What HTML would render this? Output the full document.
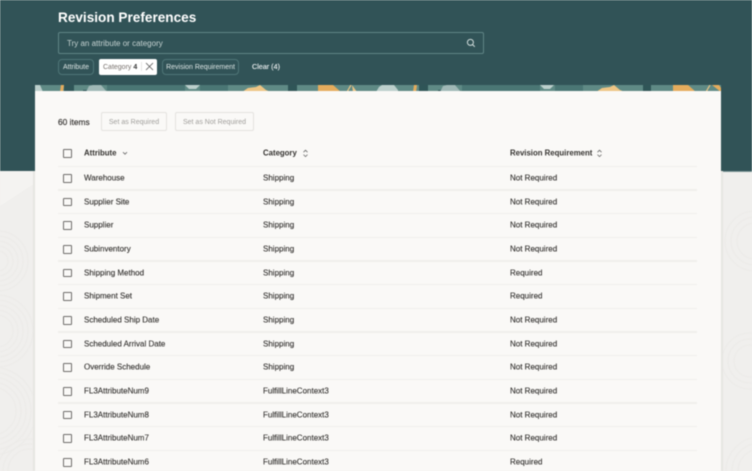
<!DOCTYPE html>
<html><head><meta charset="utf-8"><style>
html,body{margin:0;padding:0;width:752px;height:471px;overflow:hidden;background:#f0efed}
body{font-family:"Liberation Sans",sans-serif;position:relative}
#w{position:absolute;left:0;top:0;width:752px;height:471px;overflow:hidden;filter:blur(.4px)}
.a{position:absolute;white-space:nowrap}
.chip{position:absolute;top:58.5px;height:16px;box-sizing:border-box;border:1px solid #4f7677;border-radius:4px;color:#dde6e5;font-size:7px;line-height:16px;text-align:center}
.btn{position:absolute;top:112px;height:19px;box-sizing:border-box;border:1px solid #e4e2df;border-radius:2px;color:#a09e9b;font-size:7px;line-height:19px;text-align:center}
.cb{position:absolute;left:63px;width:9px;height:8.5px;box-sizing:border-box;border:1.1px solid #6f6d6b;border-radius:1px}
.t{position:absolute;font-size:8px;line-height:10px;color:#2e2c2a;white-space:nowrap;transform:translateY(.7px);-webkit-text-stroke:.1px #2e2c2a}
.h{font-weight:bold;font-size:7.8px;color:#34322f;-webkit-text-stroke:0}
.l{position:absolute;left:58px;width:639px;height:1.3px;background:#f0efec}
</style></head><body><div id="w">
<div class="a" style="left:0;top:0;width:752px;height:171px;background:#315357"></div>
<div class="a" style="left:0;top:170.5px;width:752px;height:1px;background:#7b9596"></div>
<svg class="a" style="left:0;top:171px" width="752" height="300" fill="none" stroke="#e9e8e5" stroke-width=".6">
<path d="M0 35L35 12V0H0Z" fill="#f4f3f1" stroke="none"/>
<circle cx="-2" cy="90" r="30"/><circle cx="-2" cy="90" r="25"/><circle cx="-2" cy="90" r="20"/><circle cx="-2" cy="90" r="15"/><circle cx="-2" cy="90" r="10"/>
<circle cx="-3" cy="160" r="36"/><circle cx="-3" cy="160" r="31"/><circle cx="-3" cy="160" r="26"/><circle cx="-3" cy="160" r="21"/><circle cx="-3" cy="160" r="16"/>
<circle cx="-8" cy="240" r="44"/><circle cx="-8" cy="240" r="39"/><circle cx="-8" cy="240" r="34"/><circle cx="-8" cy="240" r="29"/><circle cx="-8" cy="240" r="24"/>
<circle cx="30" cy="300" r="32"/><circle cx="30" cy="300" r="27"/><circle cx="30" cy="300" r="22"/>
<circle cx="755" cy="70" r="30"/><circle cx="755" cy="70" r="24"/><circle cx="755" cy="70" r="18"/>
<circle cx="750" cy="190" r="28"/><circle cx="750" cy="190" r="22"/><circle cx="750" cy="190" r="16"/>
<circle cx="760" cy="300" r="34"/><circle cx="760" cy="300" r="28"/><circle cx="760" cy="300" r="22"/>
</svg>
<div class="a" style="left:33px;top:171px;width:2px;height:300px;background:#e6e5e2"></div>
<div class="a" style="left:721px;top:171px;width:2px;height:300px;background:#e6e5e2"></div>
<svg class="a" style="left:35px;top:85px" width="686" height="7" viewBox="35 85 686 7">
<rect x="35" y="85" width="686" height="7" fill="#5f8a85"/>
<rect x="107" y="85" width="78" height="7" fill="#4a7674"/><rect x="462" y="85" width="78" height="7" fill="#4a7674"/>
<rect x="200" y="85" width="28" height="7" fill="#4a7674"/><rect x="555" y="85" width="28" height="7" fill="#4a7674"/>
<g fill="#2f5557"><rect x="64" y="85" width="10" height="7"/><rect x="419" y="85" width="9" height="7"/><path d="M288 85h9v7h-9z"/><path d="M643 85h8v7h-8z"/><rect x="83" y="90" width="6" height="2"/><rect x="438" y="90" width="5" height="2"/></g>
<g fill="#bccfcc"><path d="M35 85h5l3 7h-8z"/><path d="M376 92l3-5 3-2h12l4 5v2z"/><path d="M185 85h15l-4 4h-7z"/><path d="M540 85h14l-4 4h-6z"/></g>
<g fill="#a0b8b6"><path d="M86 92l3-6 4-1h8l6 7z"/><path d="M440 92l3-6 4-1h8l6 7z"/></g>
<g fill="#eec585"><path d="M242 92l6-4 8-1 4-2 6 5 5 2z"/><path d="M596 92l6-4 8-1 4-2 6 5 5 2z"/></g>
<g fill="#e5ac5d"><path d="M60 92l1-7h3l-1 7z"/><path d="M413 92l1-7h3l-1 7z"/><path d="M318 85h15l8 7h-23z"/><path d="M673 85h15l8 7h-23z"/><path d="M712 85h7l2 3v4z"/></g>
<path d="M347 92l4-7M706 92l4-7" stroke="#eec585" stroke-width="1.2"/>
<path d="M352 85l5 7h-4z" fill="#eec585"/>
</svg>
<div class="a" style="left:35px;top:91px;width:686px;height:380px;background:#faf9f7"></div>
<div class="a" style="left:58px;top:8.5px;font-size:13.6px;line-height:18px;font-weight:bold;color:#fff">Revision Preferences</div>
<div class="a" style="left:58px;top:32px;width:426px;height:22px;box-sizing:border-box;border:1px solid #5f8485;border-radius:2px"></div>
<div class="a" style="left:67px;top:38.5px;font-size:8px;line-height:10px;color:#c5d2d1">Try an attribute or category</div>
<svg class="a" style="left:466px;top:38px" width="10" height="10" fill="none" stroke="#d3dedd" stroke-width="1"><circle cx="4.4" cy="4.4" r="3"/><path d="M6.6 6.6L8.8 8.8"/></svg>
<div class="chip" style="left:58px;width:36px">Attribute</div>
<div class="a" style="left:99px;top:58.5px;width:58px;height:16px;background:#fff;border-radius:2px"></div>
<div class="a" style="left:103px;top:62.5px;font-size:7px;line-height:10px;color:#77706c">Category <b style="color:#333">4</b></div>
<div class="a" style="left:141px;top:62px;width:1px;height:9px;background:#e6e5e3"></div>
<svg class="a" style="left:145px;top:62px" width="9" height="9" stroke="#555" stroke-width=".8"><path d="M1 1L8 8M8 1L1 8"/></svg>
<div class="chip" style="left:162px;width:77px">Revision Requirement</div>
<div class="a" style="left:252px;top:62px;font-size:7.2px;line-height:10px;color:#f2f5f5;-webkit-text-stroke:.1px #f2f5f5">Clear (4)</div>
<div class="a" style="left:58px;top:116.7px;font-size:8.4px;line-height:10px;color:#2e2c2a;-webkit-text-stroke:.15px #2e2c2a">60 items</div>
<div class="btn" style="left:101px;width:66px">Set as Required</div>
<div class="btn" style="left:175px;width:79px">Set as Not Required</div>

<div class="cb" style="top:149px"></div>
<div class="t h" style="left:84px;top:148px">Attribute</div>
<svg class="a" style="left:122px;top:150.5px" width="7" height="6" fill="none" stroke="#666" stroke-width=".8"><path d="M1 1.2L3 3.2L5 1.2"/></svg>
<div class="t h" style="left:263px;top:148px">Category</div>
<svg class="a" style="left:302px;top:149px" width="7" height="9" fill="none" stroke="#666" stroke-width=".8"><path d="M1.5 3.2L3.5 1.2L5.5 3.2M1.5 5.6L3.5 7.6L5.5 5.6"/></svg>
<div class="t h" style="left:510px;top:148px">Revision Requirement</div>
<svg class="a" style="left:596px;top:149px" width="7" height="9" fill="none" stroke="#666" stroke-width=".8"><path d="M1.5 3.2L3.5 1.2L5.5 3.2M1.5 5.6L3.5 7.6L5.5 5.6"/></svg>
<div class="l" style="top:165.5px"></div>

<div class="cb" style="top:174px"></div><div class="t" style="left:84px;top:173px">Warehouse</div><div class="t" style="left:263px;top:173px">Shipping</div><div class="t" style="left:510px;top:173px">Not Required</div><div class="l" style="top:189.3px"></div>
<div class="cb" style="top:197.7px"></div><div class="t" style="left:84px;top:196.7px">Supplier Site</div><div class="t" style="left:263px;top:196.7px">Shipping</div><div class="t" style="left:510px;top:196.7px">Not Required</div><div class="l" style="top:213px"></div>
<div class="cb" style="top:221.3px"></div><div class="t" style="left:84px;top:220.3px">Supplier</div><div class="t" style="left:263px;top:220.3px">Shipping</div><div class="t" style="left:510px;top:220.3px">Not Required</div><div class="l" style="top:236.6px"></div>
<div class="cb" style="top:245px"></div><div class="t" style="left:84px;top:244px">Subinventory</div><div class="t" style="left:263px;top:244px">Shipping</div><div class="t" style="left:510px;top:244px">Not Required</div><div class="l" style="top:260.3px"></div>
<div class="cb" style="top:268.7px"></div><div class="t" style="left:84px;top:267.7px">Shipping Method</div><div class="t" style="left:263px;top:267.7px">Shipping</div><div class="t" style="left:510px;top:267.7px">Required</div><div class="l" style="top:284px"></div>
<div class="cb" style="top:292.3px"></div><div class="t" style="left:84px;top:291.3px">Shipment Set</div><div class="t" style="left:263px;top:291.3px">Shipping</div><div class="t" style="left:510px;top:291.3px">Required</div><div class="l" style="top:307.6px"></div>
<div class="cb" style="top:316px"></div><div class="t" style="left:84px;top:315px">Scheduled Ship Date</div><div class="t" style="left:263px;top:315px">Shipping</div><div class="t" style="left:510px;top:315px">Not Required</div><div class="l" style="top:331.3px"></div>
<div class="cb" style="top:339.7px"></div><div class="t" style="left:84px;top:338.7px">Scheduled Arrival Date</div><div class="t" style="left:263px;top:338.7px">Shipping</div><div class="t" style="left:510px;top:338.7px">Not Required</div><div class="l" style="top:355px"></div>
<div class="cb" style="top:363.3px"></div><div class="t" style="left:84px;top:362.3px">Override Schedule</div><div class="t" style="left:263px;top:362.3px">Shipping</div><div class="t" style="left:510px;top:362.3px">Not Required</div><div class="l" style="top:378.6px"></div>
<div class="cb" style="top:387px"></div><div class="t" style="left:84px;top:386px">FL3AttributeNum9</div><div class="t" style="left:263px;top:386px">FulfillLineContext3</div><div class="t" style="left:510px;top:386px">Not Required</div><div class="l" style="top:402.3px"></div>
<div class="cb" style="top:410.7px"></div><div class="t" style="left:84px;top:409.7px">FL3AttributeNum8</div><div class="t" style="left:263px;top:409.7px">FulfillLineContext3</div><div class="t" style="left:510px;top:409.7px">Not Required</div><div class="l" style="top:426px"></div>
<div class="cb" style="top:434.3px"></div><div class="t" style="left:84px;top:433.3px">FL3AttributeNum7</div><div class="t" style="left:263px;top:433.3px">FulfillLineContext3</div><div class="t" style="left:510px;top:433.3px">Not Required</div><div class="l" style="top:449.6px"></div>
<div class="cb" style="top:458px"></div><div class="t" style="left:84px;top:457px">FL3AttributeNum6</div><div class="t" style="left:263px;top:457px">FulfillLineContext3</div><div class="t" style="left:510px;top:457px">Required</div>
</div></body></html>
